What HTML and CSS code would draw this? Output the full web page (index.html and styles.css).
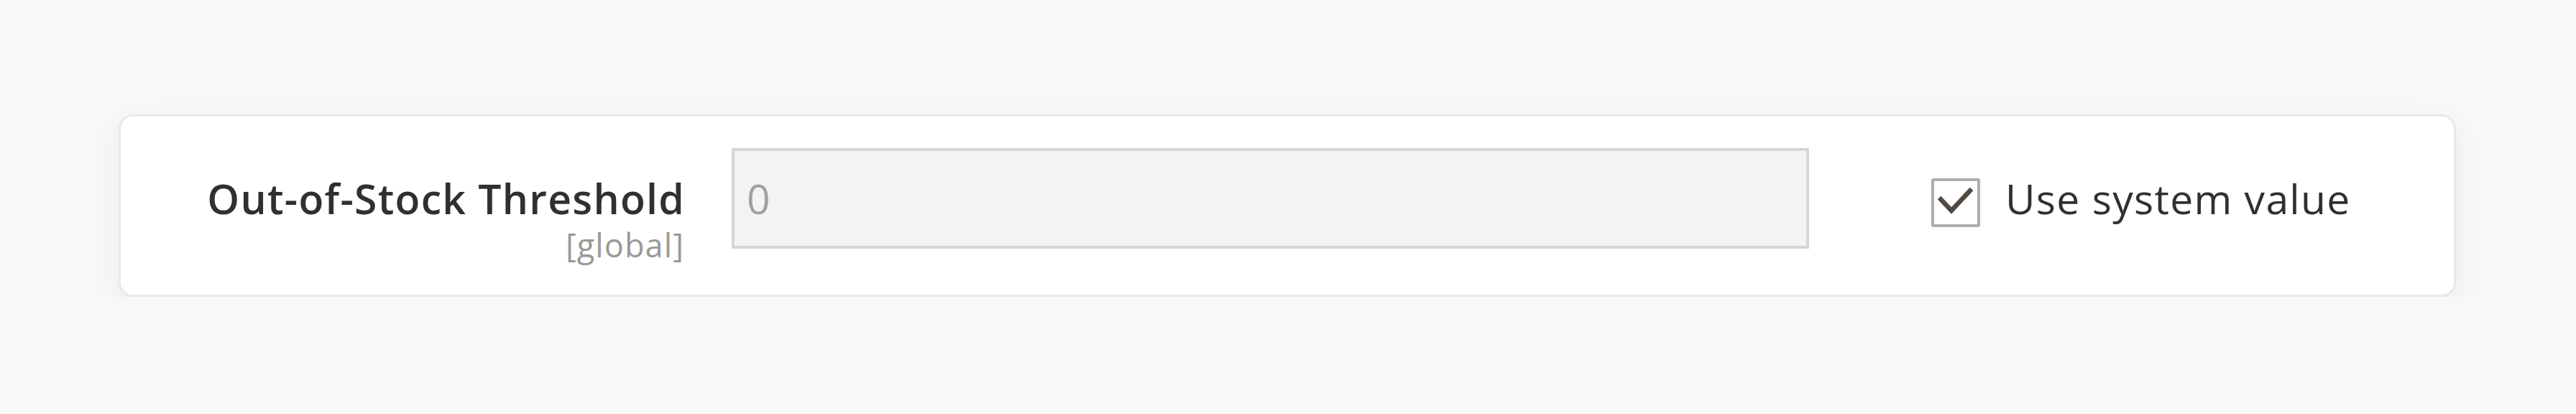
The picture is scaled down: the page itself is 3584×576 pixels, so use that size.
FILE: index.html
```html
<!DOCTYPE html>
<html lang="en">
<head>
    <meta charset="UTF-8">
    <title>Out-of-Stock Threshold</title>
    <link rel="stylesheet" href="styles.css">
</head>
<body>

    <div class="card">
        <div class="field">
            <!-- Label with scope -->
            <div class="field-label">
                <span class="label-text">Out-of-Stock Threshold</span>
                <span class="scope">[global]</span>
            </div>

            <input class="field-input" type="text" value="0" disabled />

            <!-- Use system value -->
            <label class="use-default">
                <span class="checkbox">
                    <svg viewBox="0 0 60 60" width="60" height="60">
                        <path d="M7 23 L24 41 L52 11" fill="none" stroke="#514943" stroke-width="6.5" />
                    </svg>
                </span>
                <span class="use-text">Use system value</span>
            </label>
        </div>
    </div>

</body>
</html>
```

FILE: styles.css
```css
/* Reset */
body {
    margin: 0;
    padding: 159px 167px 0 165px;
    background: #f8f8f8;
    font-family: 'Open Sans', 'Liberation Sans', sans-serif;
}

.card {
    background: #ffffff;
    border: 3px solid #e9e9e9;
    border-radius: 20px;
    box-shadow: 0 12px 40px rgba(0, 0, 0, 0.06);
    padding: 44px 0;
}

.field {
    display: flex;
    align-items: flex-start;
}

.field-label {
    width: 784px;
    padding-top: 30px;
    display: flex;
    flex-direction: column;
    align-items: flex-end;
}

.label-text {
    font-size: 57px;
    font-weight: 600;
    line-height: 80px;
    letter-spacing: 1.3px;
    margin-right: -1px;
    color: #303030;
}

.scope {
    font-size: 45px;
    line-height: 50px;
    letter-spacing: 1.1px;
    color: #999999;
}

.field-input {
    margin-left: 66px;
    width: 1499px;
    height: 140px;
    box-sizing: border-box;
    border: 4px solid #d6d6d6;
    border-radius: 0;
    background: #f3f3f3;
    padding: 0 17px;
    font-family: 'Open Sans', 'Liberation Sans', sans-serif;
    font-size: 57px;
    color: #a0a0a0;
    outline: none;
}

.use-default {
    margin-left: 170px;
    padding-top: 30px;
    display: flex;
    align-items: flex-start;
}

.checkbox {
    width: 68px;
    height: 68px;
    box-sizing: border-box;
    border: 4px solid #adadad;
    border-radius: 3px;
    margin-top: 12px;
    display: flex;
}

.use-text {
    margin-left: 35px;
    font-size: 57px;
    line-height: 80px;
    letter-spacing: 1.3px;
    color: #303030;
}
```
